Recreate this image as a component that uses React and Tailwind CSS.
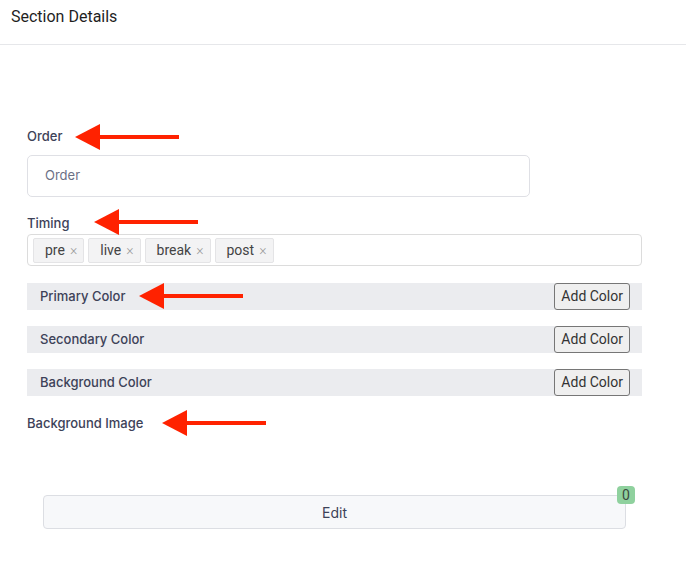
import React from 'react';

const TAGS = ['pre', 'live', 'break', 'post'];

const Arrow = ({ left, top }) => (
  <svg
    className="absolute pointer-events-none"
    style={{ left, top }}
    width="105"
    height="26"
    viewBox="0 0 105 26"
  >
    <polygon points="0,13 25,0 25,26" fill="#ff2200" />
    <rect x="22" y="11" width="82" height="4" fill="#ff2200" />
  </svg>
);

const ColorRow = ({ label }) => (
  <div className="flex items-center justify-between h-[27px] bg-[#ebecef] pl-[13px] pr-[12px]">
    <span className="text-[13px] font-medium text-[#3d4258]">{label}</span>
    <button className="h-[27px] px-[6px] bg-[#efefef] border border-[#767676] rounded-[3px] text-[14px] text-[#333] font-['Roboto',sans-serif]">
      Add Color
    </button>
  </div>
);

export default function App() {
  return (
    <div className="relative w-[686px] h-[570px] bg-white font-['Inter',sans-serif] overflow-hidden">
      {/* header */}
      <div className="h-[45px] border-b border-[#e6e7ea] pl-[11px] pt-[7px]">
        <h1 className="text-[16px] leading-[20px] text-[#1f1f1f] font-['Roboto',sans-serif]">
          Section Details
        </h1>
      </div>

      <div className="pl-[27px] pr-[44px] pt-[82px]">
        <label className="block text-[13px] leading-[18px] font-medium text-[#3d4258]">Order</label>
        <div className="mt-[10px] w-[503px] h-[42px] border border-[#dfe0e5] rounded-[5px] flex items-center pl-[17px]">
          <span className="text-[13px] text-[#6b7086]">Order</span>
        </div>

        <label className="block mt-[17px] text-[13px] leading-[18px] font-medium text-[#3d4258]">Timing</label>
        <div className="mt-[2px] h-[32px] border border-[#dcdcdc] rounded-[4px] flex items-center gap-[4px] pl-[5px]">
          {TAGS.map((t) => (
            <span
              key={t}
              className="h-[25px] flex items-center gap-[5px] pl-[11px] pr-[6px] bg-[#f3f3f4] border border-[#e4e4e6] rounded-[2px] text-[14px] text-[#444] font-['Roboto',sans-serif]"
            >
              {t}
              <span className="text-[14px] font-light text-[#999]">×</span>
            </span>
          ))}
        </div>

        <div className="mt-[17px] flex flex-col gap-[16px]">
          <ColorRow label="Primary Color" />
          <ColorRow label="Secondary Color" />
          <ColorRow label="Background Color" />
        </div>

        <label className="block mt-[18px] text-[13px] leading-[18px] font-medium text-[#3d4258]">Background Image</label>

        <div className="relative mt-[63px] ml-[16px] w-[583px] h-[34px] bg-[#f7f8fa] border border-[#dcdee3] rounded-[4px] flex items-center justify-center">
          <span className="text-[14px] text-[#3d4258]">Edit</span>
          <span className="absolute -top-[10px] -right-[10px] w-[18px] h-[18px] bg-[#8fd19e] rounded-[4px] flex items-center justify-center text-[14px] text-[#3b4a40] font-['Roboto',sans-serif]">
            0
          </span>
        </div>
      </div>

      <Arrow left={75} top={124} />
      <Arrow left={94} top={209} />
      <Arrow left={139} top={283} />
      <Arrow left={162} top={410} />
    </div>
  );
}
